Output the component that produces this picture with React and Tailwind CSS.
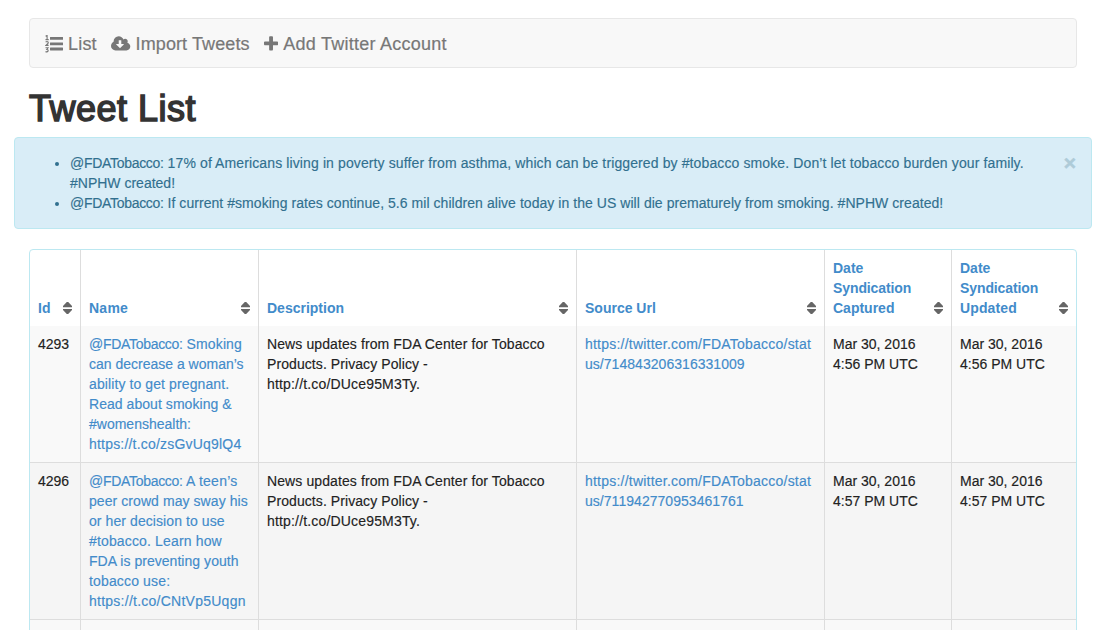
import React from 'react';

const COLS = 'grid grid-cols-[51px_178px_318px_248px_127px_124px]';

function ListIcon() {
  return (
    <svg className="mr-[5px] h-[18px] w-[18px] shrink-0" viewBox="0 0 18 18" fill="currentColor">
      <rect x="5" y="2" width="13" height="2.8" rx="0.3" />
      <rect x="5" y="7.4" width="13" height="2.8" rx="0.3" />
      <rect x="5" y="12.6" width="13" height="2.8" rx="0.3" />
      <g fill="none" stroke="currentColor" strokeWidth="1.1">
        <path d="M0.6 1.3L2.1 0.4V4.4M0.5 4.6H3.7" />
        <path d="M0.6 7.2Q2 6 3 7T0.9 10.4H3.6" />
        <path d="M0.5 12.8H3L1.8 14.4Q3.2 14.4 3.2 15.7T0.4 16.8" />
      </g>
    </svg>
  );
}

function CloudIcon() {
  return (
    <svg className="mr-[5px] h-[18px] w-[19.3px] shrink-0" viewBox="0 0 1920 1792" fill="currentColor">
      <path d="M1280 928q0-14-9-23t-23-9h-224v-352q0-13-9.500-22.500t-22.500-9.500h-192q-13 0-22.500 9.500t-9.500 22.500v352h-224q-13 0-22.500 9.500t-9.500 22.500q0 14 9 23l352 352q9 9 23 9t23-9l351-351q10-12 10-24zm640 224q0 159-112.500 271.500t-271.500 112.500h-1088q-185 0-316.500-131.500t-131.500-316.500q0-130 70-240t188-165q-2-30-2-43 0-212 150-362t362-150q156 0 285.500 87t188.500 231q71-62 166-62 106 0 181 75t75 181q0 76-41 138 130 31 213.500 135.500t83.500 238.500z" />
    </svg>
  );
}

function PlusIcon() {
  return (
    <svg className="mr-[5px] h-[18px] w-[14.1px] shrink-0" viewBox="192 0 1408 1792" fill="currentColor">
      <path d="M1600 736v192q0 40-28 68t-68 28h-416v416q0 40-28 68t-68 28h-192q-40 0-68-28t-28-68v-416h-416q-40 0-68-28t-28-68v-192q0-40 28-68t68-28h416v-416q0-40 28-68t68-28h192q40 0 68 28t28 68v416h416q40 0 68 28t28 68z" />
    </svg>
  );
}

function SortIcon() {
  return (
    <svg className="mb-1 h-3 w-[9px] shrink-0" viewBox="0 0 9 12" fill="#666">
      <path d="M3.8 0H5.2L9 4V5.2H0V4zM0 7H9V8L5.2 12H3.8L0 8z" />
    </svg>
  );
}

/* Letter spacing for individual lines of text; an account handle is tracked separately. */
const TRACKING = {
  ' 17% of Americans living in poverty suffer from asthma, which can be triggered by #tobacco smoke. Don’t let tobacco burden your family.': 'tracking-[0.115px]',
  ' If current #smoking rates continue, 5.6 mil children alive today in the US will die prematurely from smoking. #NPHW created!': 'tracking-[0.05px]',
  'https://twitter.com/FDATobacco/stat': 'tracking-[0.22px]',
  'us/714843206316331009': 'tracking-[0.04px]',
  'us/711942770953461761': 'tracking-[0.04px]',
  'https://t.co/zsGvUq9lQ4': 'tracking-[0.2px]',
  'https://t.co/CNtVp5Uqgn': 'tracking-[0.25px]',
  'News updates from FDA Center for Tobacco': 'tracking-[0.1px]',
  'Products. Privacy Policy -': 'tracking-[0.08px]',
  'http://t.co/DUce95M3Ty.': 'tracking-[0.17px]',
  ' Smoking': 'tracking-[0.12px]',
  ' A teen’s': 'tracking-[0.25px]',
  'ability to get pregnant.': 'tracking-[0.1px]',
  'Read about smoking &': 'tracking-[0.05px]',
  'peer crowd may sway his': 'tracking-[0.07px]',
  'or her decision to use': 'tracking-[0.08px]',
  '#tobacco. Learn how': 'tracking-[0.15px]',
  'FDA is preventing youth': 'tracking-[0.04px]',
  'tobacco use:': 'tracking-[0.15px]',
  Name: 'tracking-[0.25px]',
  Syndication: 'tracking-[-0.1px]',
  Updated: 'tracking-[0.12px]',
};

const HANDLE = '@FDATobacco:';

function Lines({ items }) {
  return items.map((t) => {
    const handled = t.startsWith(HANDLE);
    const rest = handled ? t.slice(HANDLE.length) : t;
    return (
      <span key={t} className="block whitespace-nowrap">
        {handled && <span className="tracking-[-0.3px]">{HANDLE}</span>}
        <span className={TRACKING[rest] || ''}>{rest}</span>
      </span>
    );
  });
}

const HEADERS = [['Id'], ['Name'], ['Description'], ['Source Url'], ['Date', 'Syndication', 'Captured'], ['Date', 'Syndication', 'Updated']];

const DESCRIPTION = ['News updates from FDA Center for Tobacco', 'Products. Privacy Policy -', 'http://t.co/DUce95M3Ty.'];

const ROWS = [
  {
    bg: 'bg-[#f9f9f9]',
    cells: [
      ['4293'],
      ['@FDATobacco: Smoking', 'can decrease a woman’s', 'ability to get pregnant.', 'Read about smoking &', '#womenshealth:', 'https://t.co/zsGvUq9lQ4'],
      DESCRIPTION,
      ['https://twitter.com/FDATobacco/stat', 'us/714843206316331009'],
      ['Mar 30, 2016', '4:56 PM UTC'],
      ['Mar 30, 2016', '4:56 PM UTC'],
    ],
  },
  {
    bg: 'bg-[#f5f5f5] border-t border-[#ddd]',
    cells: [
      ['4296'],
      ['@FDATobacco: A teen’s', 'peer crowd may sway his', 'or her decision to use', '#tobacco. Learn how', 'FDA is preventing youth', 'tobacco use:', 'https://t.co/CNtVp5Uqgn'],
      DESCRIPTION,
      ['https://twitter.com/FDATobacco/stat', 'us/711942770953461761'],
      ['Mar 30, 2016', '4:57 PM UTC'],
      ['Mar 30, 2016', '4:57 PM UTC'],
    ],
  },
  { bg: 'bg-[#f9f9f9] border-t border-[#ddd]', cells: [[], [], [], [], [], []] },
];

export default function App() {
  return (
    <div className="h-[630px] w-[1097px] overflow-hidden bg-white pt-[18px] font-['Helvetica_Neue','Liberation_Sans',Arial,sans-serif] text-[14px] leading-5 text-[#222]">
      <nav className="mr-5 ml-[29px] flex h-[50px] items-center gap-[14.5px] rounded border border-[#e7e7e7] bg-[#f8f8f8] pt-0.5 pl-[15px] text-[18px] text-[#777] [-webkit-text-stroke:0.2px_#777]">
        <a className="flex items-center tracking-[0.2px]"><ListIcon />List</a>
        <a className="flex items-center tracking-[0.1px]"><CloudIcon />Import Tweets</a>
        <a className="flex items-center tracking-[0.25px]"><PlusIcon />Add Twitter Account</a>
      </nav>
      <h1 className="mt-[21px] ml-[29px] text-[36px] leading-10 font-medium tracking-[0.5px] text-[#333] [-webkit-text-stroke:1.5px_#333]">Tweet List</h1>
      <div className="mt-2 mr-[5px] ml-[14px] flex h-[92px] justify-between rounded border border-[#bce8f1] bg-[#d9edf7] pt-[15px] pr-[15px] pl-[55px] text-[#31708f] [-webkit-text-stroke:0.15px_#31708f]">
        <ul className="list-disc">
          <li>
            <Lines items={['@FDATobacco: 17% of Americans living in poverty suffer from asthma, which can be triggered by #tobacco smoke. Don’t let tobacco burden your family.', '#NPHW created!']} />
          </li>
          <li>
            <Lines items={['@FDATobacco: If current #smoking rates continue, 5.6 mil children alive today in the US will die prematurely from smoking. #NPHW created!']} />
          </li>
        </ul>
        <button className="h-5 text-[21px] leading-5 font-bold text-[#aecbd8] [-webkit-text-stroke:0.5px_#aecbd8]">×</button>
      </div>
      <main className="mt-5 ml-[29px] w-[1048px] rounded-t border border-[#bce8f1]">
        <div className={`${COLS} h-[76px] font-bold text-[#428bca]`}>
          {HEADERS.map((h, i) => (
            <div key={i} className="flex items-end justify-between border-r border-[#ddd] py-2 pr-2 pl-2 last:border-r-0">
              <div><Lines items={h} /></div>
              <SortIcon />
            </div>
          ))}
        </div>
        {ROWS.map((r, i) => (
          <div key={i} className={`${COLS} ${r.bg}`}>
            {r.cells.map((c, j) => (
              <div key={j} className={`min-h-9 border-r border-[#ddd] p-2 last:border-r-0 ${j === 1 || j === 3 ? 'text-[#428bca] [-webkit-text-stroke:0.15px_#428bca]' : '[-webkit-text-stroke:0.15px_#222]'}`}>
                <Lines items={c} />
              </div>
            ))}
          </div>
        ))}
      </main>
    </div>
  );
}
